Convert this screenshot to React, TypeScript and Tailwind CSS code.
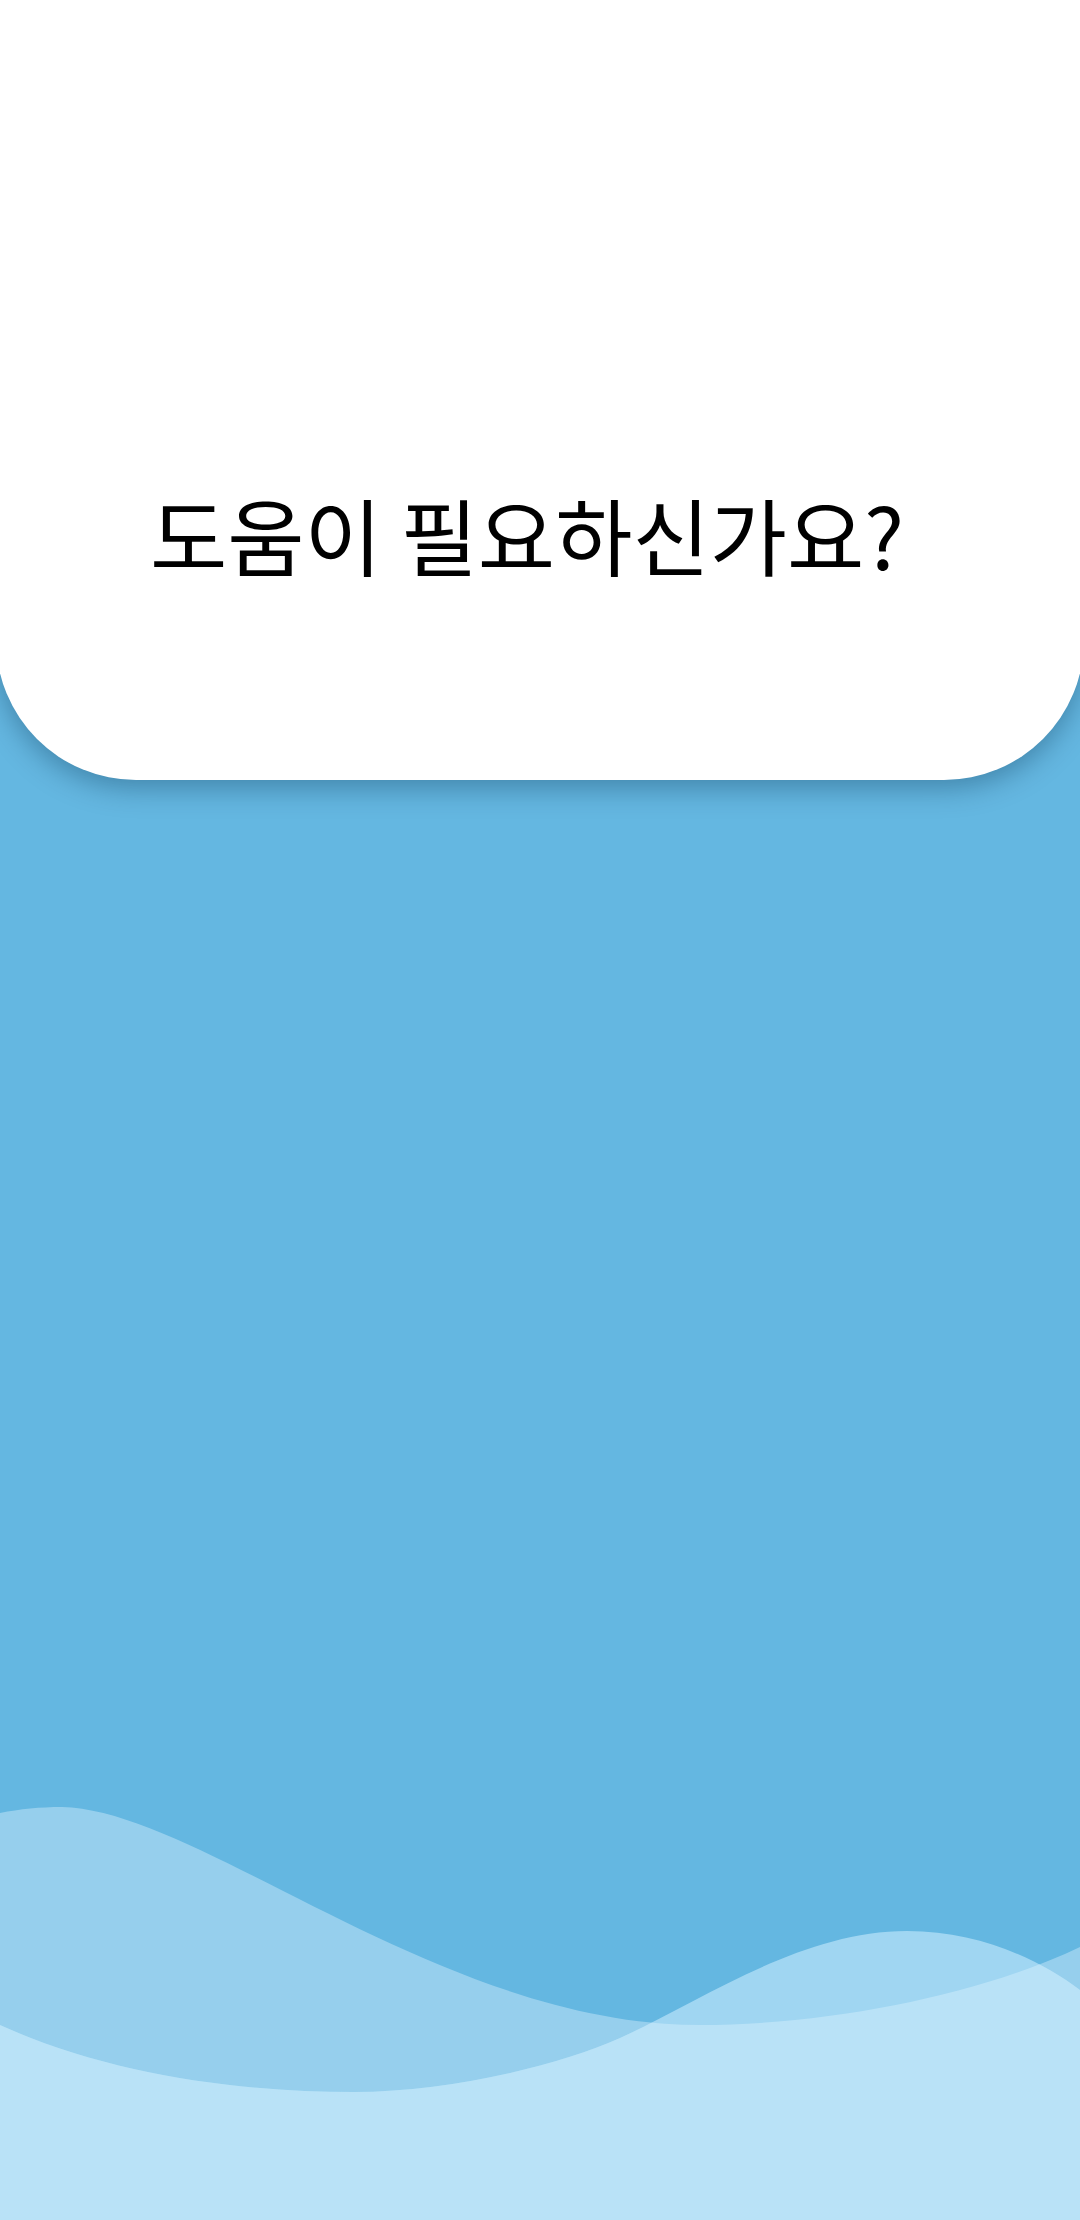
import React from 'react';

const WAVE_A =
  'M0,33 C20,29 40,27 62,27 C200,30 440,245 700,245 C830,245 980,215 1080,167 L1080,440 L0,440 Z';
const WAVE_B =
  'M0,245 C110,295 240,312 354,312 C450,312 560,285 620,258 C700,222 800,151 907,151 C980,151 1040,180 1080,210 L1080,440 L0,440 Z';

function Waves() {
  return (
    <svg width="1080" height="440" viewBox="0 0 1080 440" className="block">
      <defs>
        <clipPath id="waveB">
          <path d={WAVE_B} />
        </clipPath>
      </defs>
      <path d={WAVE_A} fill="#96cfed" />
      <path d={WAVE_B} fill="#a0d6f2" />
      <path d={WAVE_A} fill="#b9e2f7" clipPath="url(#waveB)" />
    </svg>
  );
}

export default function App() {
  return (
    <div className="w-[1080px] h-[2220px] overflow-hidden bg-[#64b7e1] flex flex-col">
      <div className="w-[1088px] -ml-[4px] h-[780px] shrink-0 bg-white rounded-b-[140px] shadow-[0_8px_28px_rgba(0,40,70,0.35)] flex flex-col justify-end items-center pb-[204px] pr-[26px]">
        <h1
          className="text-[84px] leading-none font-normal text-black"
          style={{ fontFamily: '"Noto Sans CJK KR", "Noto Sans", sans-serif' }}
        >
          도움이 필요하신가요?
        </h1>
      </div>
      <div className="flex-1" />
      <Waves />
    </div>
  );
}
